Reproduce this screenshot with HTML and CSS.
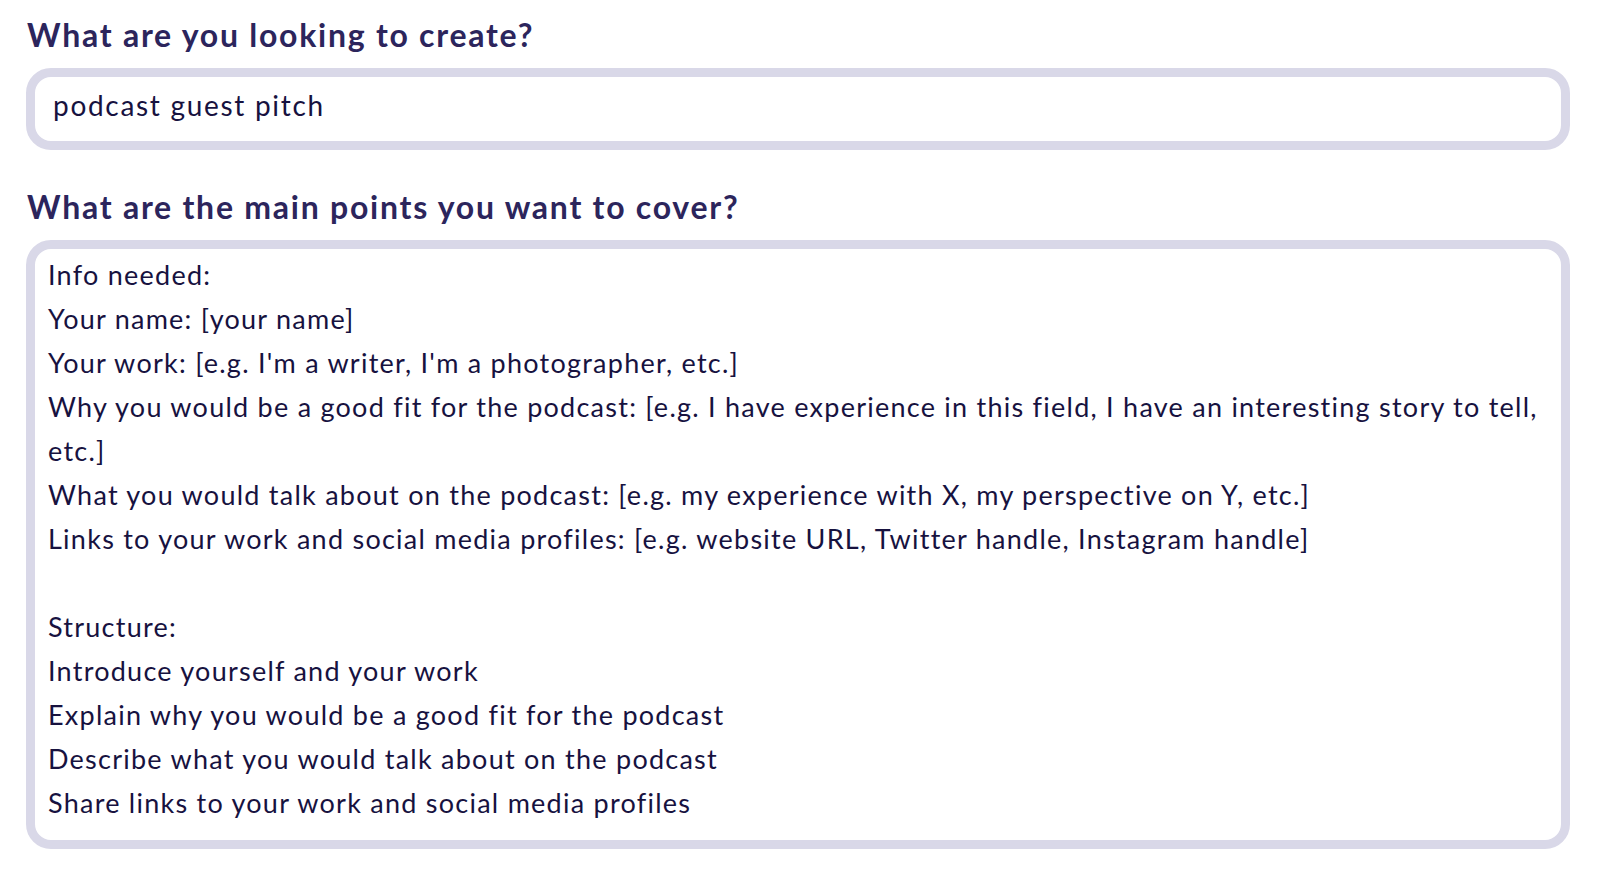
FILE: index.html
```html
<!DOCTYPE html>
<html>
<head>
<meta charset="utf-8">
<link rel="stylesheet" href="styles.css">
</head>
<body>
<div class="page">
  <section class="field">
    <h2 class="label">What are you looking to create?</h2>
    <div class="box input">podcast guest pitch</div>
  </section>
  <section class="field">
    <h2 class="label">What are the main points you want to cover?</h2>
    <div class="box area">
      <div class="line">Info needed:</div>
      <div class="line">Your name: [your name]</div>
      <div class="line">Your work: [e.g. I'm a writer, I'm a photographer, etc.]</div>
      <div class="line">Why you would be a good fit for the podcast: [e.g. I have experience in this field, I have an interesting story to tell, etc.]</div>
      <div class="line">What you would talk about on the podcast: [e.g. my experience with X, my perspective on Y, etc.]</div>
      <div class="line">Links to your work and social media profiles: [e.g. website URL, Twitter handle, Instagram handle]</div>
      <div class="line blank">&nbsp;</div>
      <div class="line">Structure:</div>
      <div class="line">Introduce yourself and your work</div>
      <div class="line">Explain why you would be a good fit for the podcast</div>
      <div class="line">Describe what you would talk about on the podcast</div>
      <div class="line">Share links to your work and social media profiles</div>
    </div>
  </section>
</div>
</body>
</html>
```

FILE: styles.css
```css
html, body {
  margin: 0;
  padding: 0;
  background: #ffffff;
}
.page {
  padding: 14px 30px 0 26px;
  font-family: "Lato", "Noto Sans", sans-serif;
}
.field {
  display: flex;
  flex-direction: column;
}
.label {
  margin: 0 0 12px 1px;
  font-size: 32px;
  font-weight: 700;
  line-height: 42px;
  letter-spacing: 1.75px;
  color: #2c255c;
}
.box {
  border: 9px solid #d9d8e8;
  border-radius: 25px;
  background: #ffffff;
  color: #17123f;
  font-weight: 400;
}
.input {
  height: 82px;
  box-sizing: border-box;
  padding: 6px 18px 0 18px;
  font-size: 28px;
  line-height: 44px;
  letter-spacing: 1.7px;
  margin-bottom: 36px;
}
.area {
  padding: 4px 12px 15px 13px;
  font-size: 27px;
  line-height: 44px;
  letter-spacing: 1.25px;
}
```
